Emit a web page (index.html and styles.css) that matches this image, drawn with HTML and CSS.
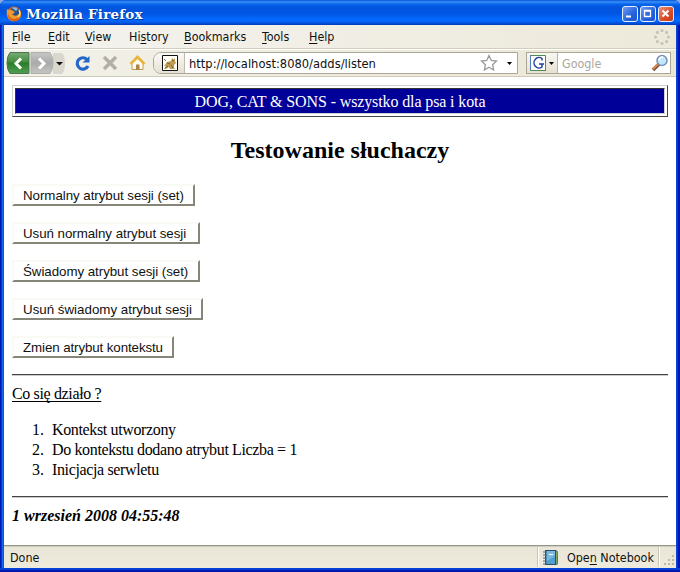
FILE: index.html
```html
<!DOCTYPE html>
<html lang="pl">
<head>
<meta charset="utf-8">
<title>Mozilla Firefox</title>
<link rel="stylesheet" href="styles.css">
</head>
<body>
<div class="window">
  <header class="titlebar">
    <svg class="fox" width="16" height="16" viewBox="0 0 16 16">
      <circle cx="8" cy="8" r="7.4" fill="#cf641a"/>
      <circle cx="8.6" cy="6.8" r="5.4" fill="#284f8e"/>
      <path d="M6 2Q9 0 12 3L10 5L8 3.500Z" fill="#8abde0"/>
      <path d="M1 3L3 4Q6 3 7 5L9 6Q8 8 6 8Q8 11 12 9Q14 7 13 3Q17 8 13 13Q8 17 3 13Q0 9 1 3Z" fill="#f19b2a"/>
      <path d="M2 6Q2 12 8 13Q12 13 14 9Q13 15 8 15Q1 14 2 6Z" fill="#d75b16"/>
      <path d="M13 4Q15 8 12 11" fill="none" stroke="#ffe064" stroke-width="1.300"/>
    </svg>
    <span class="title">Mozilla Firefox</span>
    <div class="controls">
      <span class="control"><svg width="16" height="16"><path d="M4 10.500h5" stroke="#fff" stroke-width="2"/></svg></span>
      <span class="control"><svg width="16" height="16"><path d="M4.500 4.500h6v6h-6zM4 5h7" fill="none" stroke="#fff" stroke-width="1.300"/></svg></span>
      <span class="control close"><svg width="16" height="16"><path d="M4.500 4.500l6 6m0-6l-6 6" stroke="#fff" stroke-width="2"/></svg></span>
    </div>
  </header>

  <nav class="menu">
    <span><u>F</u>ile</span><span><u>E</u>dit</span><span><u>V</u>iew</span><span>Hi<u>s</u>tory</span><span><u>B</u>ookmarks</span><span><u>T</u>ools</span><span><u>H</u>elp</span>
    <svg class="throbber" width="18" height="18" viewBox="0 0 18 18" fill="#c5c3b9">
      <circle cx="9" cy="2.500" r="1.600"/><circle cx="13.600" cy="4.400" r="1.600"/><circle cx="15.500" cy="9" r="1.600"/><circle cx="13.600" cy="13.600" r="1.600"/><circle cx="9" cy="15.500" r="1.600"/><circle cx="4.400" cy="13.600" r="1.600"/><circle cx="2.500" cy="9" r="1.600"/><circle cx="4.400" cy="4.400" r="1.600"/>
    </svg>
  </nav>

  <div class="toolbar">
    <svg class="navicons" width="150" height="27" viewBox="0 0 150 27">
      <defs>
        <linearGradient id="green" x2="0" y2="1"><stop stop-color="#78aa74"/><stop offset=".45" stop-color="#438d40"/><stop offset=".5" stop-color="#277d29"/><stop offset="1" stop-color="#52a052"/></linearGradient>
        <linearGradient id="gray" x2="0" y2="1"><stop stop-color="#c7c7c4"/><stop offset=".5" stop-color="#aaa"/><stop offset="1" stop-color="#c5c5c3"/></linearGradient>
      </defs>
      <path d="M49 3h9q3 3 3 10.500T58 24h-9z" fill="#d9d7ce"/>
      <path d="M6 2.500h19v21H6Q3 20 3 13T6 2.500z" fill="url(#green)" stroke="#4d7450"/>
      <path d="M27 2.500h19q3 4 3 10.500T46 23.500H27z" fill="url(#gray)" stroke="#aeaeaa"/>
      <path d="M17 8.500l-5 5 5 5M35 8.500l5 5-5 5" fill="none" stroke="#fff" stroke-width="3"/>
      <path d="M52 12h7l-3.500 3.500z" fill="#111"/>
      <path d="M83 9.500A5.700 5.700 0 1 0 84 16" fill="none" stroke="#2367cb" stroke-width="3.200"/>
      <path d="M85.500 6v6.500h-7z" fill="#2367cb"/>
      <path d="M100 7l12 12m0-12l-12 12" stroke="#b1afa8" stroke-width="3.500"/>
      <path d="M128 13v6.500h11V13l-5.500-5z" fill="#fffdf2" stroke="#c59a48"/>
      <path d="M126.500 14l7-7 7 7" fill="none" stroke="#eab443" stroke-width="2.800"/>
      <path d="M132 14.500h3.500V20H132z" fill="#ad804b"/>
    </svg>
    <div class="address">
      <span class="identity">
        <svg width="16" height="16"><path d="M.5.500h15v15H.5z" fill="#fffef7" stroke="#111"/><path d="M2 11l3-4 4-1 1-3 1.500 1.500L13 3v3l1 2-2 2v3l2 1H8l-1-2-3 2H2l2-3z" fill="#c19b52"/><path d="M2 4l2 2M5 8l3 1M10 5l2 1M9 10l2 3M3 13l3-2" fill="none" stroke="#77634a"/></svg>
      </span>
      <span class="url">http://localhost:8080/adds/listen</span>
      <svg class="star" width="34" height="18" viewBox="0 0 34 18"><path d="M9 1.500l2.300 5 5.200.6-3.900 3.600 1 5.300L9 13.300 4.400 16l1-5.300-3.900-3.600 5.200-.6z" fill="#fff" stroke="#999" stroke-width="1.300"/><path d="M27 8h5l-2.500 3z" fill="#000"/></svg>
    </div>
    <div class="search">
      <span class="engine">
        <svg width="25" height="17" viewBox="0 0 25 17"><path d="M.5.500h15v15H.5z" fill="#fff" stroke="#4d8c4d"/><path d="M.5 0v15" stroke="#5379bd"/><path d="M15.500 1v15" stroke="#b85454"/><path d="M12 5.500V3.500A5 5.300 0 1 0 12 12V9M9 9h5" fill="none" stroke="#26429a" stroke-width="1.500"/><path d="M19 7h5l-2.500 3z"/></svg>
      </span>
      <span class="query">Google</span>
      <svg class="lens" width="18" height="18" viewBox="0 0 18 18"><path d="M2 16l6-6" stroke="#775247" stroke-width="3.600"/><path d="M2 15l5-5" stroke="#e18a43" stroke-width="2"/><circle cx="11" cy="6.500" r="5" fill="#c2e6fa" stroke="#7992ad" stroke-width="1.500"/><path d="M8 6q1-3 4-3" fill="none" stroke="#fff" stroke-width="1.500"/></svg>
    </div>
  </div>

  <main class="page">
    <div class="banner"><div>DOG, CAT &amp; SONS - wszystko dla psa i kota</div></div>
    <h1><span>Testowanie słuchaczy</span></h1>
    <div class="actions">
      <button class="w-set">Normalny atrybut sesji (set)</button>
      <button class="w-remove">Usuń normalny atrybut sesji</button>
      <button class="w-aware">Świadomy atrybut sesji (set)</button>
      <button class="w-unaware">Usuń świadomy atrybut sesji</button>
      <button class="w-context">Zmien atrybut kontekstu</button>
    </div>
    <hr>
    <p class="question"><u>Co się działo ?</u></p>
    <ol>
      <li>Kontekst utworzony</li>
      <li>Do kontekstu dodano atrybut Liczba = 1</li>
      <li>Inicjacja serwletu</li>
    </ol>
    <hr>
    <p class="date">1 wrzesień 2008 04:55:48</p>
  </main>

  <footer class="status">
    <span class="done">Done</span>
    <div class="notebook">
      <svg width="16" height="17" viewBox="0 0 16 17"><path d="M2 1h11l2 2v12l-2 1H2z" fill="#2b4d6a"/><path d="M13 2l1.500 1v12L13 15z" fill="#83a565"/><path d="M3 2h9v13H3z" fill="#4f9fd0"/><path d="M4 2h8v5L4 12z" fill="#79b9df"/><path d="M6 5h4v1H6z" fill="#fff"/><path d="M0 3h4M0 6h4M0 9h4M0 12h4M0 15h4" stroke="#536b7c"/><path d="M14 3h1v4h-1z" fill="#b9576b"/></svg>
      <span>Ope<u>n</u> Notebook</span>
    </div>
    <svg class="grip" width="12" height="12" fill="#bdb9a5"><path d="M8 0h2v2H8zM4 4h2v2H4zM8 4h2v2H8zM0 8h2v2H0zM4 8h2v2H4zM8 8h2v2H8z"/></svg>
  </footer>
</div>
</body>
</html>
```
FILE: styles.css
```css
* { box-sizing: border-box; }
body { margin: 0; background: #8fabe6; overflow: hidden; }
svg { display: block; flex: none; }
.window {
  width: 680px; height: 572px; padding: 0 4px 4px;
  display: flex; flex-direction: column;
  background: linear-gradient(to right, #0019b4 0 1px, #0831d9 1px 2px, #166aee 2px 3px, #0855dd 3px 4px, #0855dd 4px 676px, #0743d4 676px 677px, #0637c9 677px 678px, #0019b4 678px);
  border-radius: 6px 6px 0 0;
  box-shadow: inset 0 -2px #001aae, inset 0 -4px #0640d8;
  font: 12.4px "DejaVu Sans Condensed", "DejaVu Sans", sans-serif;
  font-stretch: condensed;
  color: #111;
}
.titlebar {
  height: 25px; flex: none; margin: 0 -4px; padding: 3px 6px 0;
  display: flex; align-items: center;
  border-radius: 6px 6px 0 0;
  background: linear-gradient(#0755d6 0, #3b91fa 2px, #0867ed 4px, #0355df 7px, #0255e2 13px, #0368fb 19px, #0368fb 21px, #0248cb 24px, #003bb4 25px);
}
.fox { margin-right: 4px; }
.title { font: bold 13.500px "DejaVu Serif", serif; letter-spacing: .2px; white-space: nowrap; color: #fff; text-shadow: 1px 1px #053693; }
.controls { margin-left: auto; display: flex; gap: 2px; }
.control { width: 16px; height: 16px; border: 1px solid #e7f0ff; border-radius: 3px; background: linear-gradient(135deg, #729bf2, #2461dc 60%, #2057cb); }
.control svg { margin: -1px; }
.close { background: linear-gradient(135deg, #ec9278, #d74b26 60%, #c43b17); }
.menu {
  height: 24px; flex: none; padding-left: 8px;
  display: grid; grid-template-columns: 36px 37px 44px 55px 78px 47px 1fr 23px; align-items: center;
  background: linear-gradient(to right, #f4f3ef, #ede9da);
  border-bottom: 1px solid #d1cebc;
}
.menu u, .notebook u { text-underline-offset: 2px; text-decoration-thickness: 1px; }
.toolbar {
  height: 28px; flex: none; display: flex; align-items: center;
  background: linear-gradient(to right, #f2f1e9, #ebe7d5);
  border-top: 1px solid #fff; border-bottom: 1px solid #cfcbb8;
}
.address { width: 365px; height: 22px; display: flex; align-items: center; margin-left: -1px; background: #fff; border: 1px solid #aaa798; border-radius: 8px 0 0 8px; }
.identity { width: 31px; height: 20px; padding: 2px 8px; background: linear-gradient(#fafaf7, #e4e0d2); border-right: 1px solid #bebbaa; border-radius: 7px 0 0 7px; }
.url { margin-left: 4px; font-size: 12.8px; white-space: nowrap; }
.star { margin-left: auto; margin-right: 3px; }
.search { width: 145px; height: 22px; margin-left: 8px; display: flex; align-items: center; border: 1px solid #aaa798; background: #fff; }
.engine { width: 31px; height: 20px; padding: 2px 3px; border-right: 1px solid #b8b4a3; background: linear-gradient(#f8f7f2, #e5e1d2); }
.query { margin-left: 4px; color: #aaa79d; }
.lens { margin-left: auto; margin-right: 1px; }
.page { flex: 1; min-height: 0; padding: 8px 8px 0; background: #fff; font: 16px/20px "Liberation Serif", serif; color: #000; }
.banner { height: 32px; padding: 2px; border: 1px solid; border-color: #d0d0d0 #444 #444 #d0d0d0; }
.banner div { height: 26px; border: 1px solid; border-color: #333 #d0d0d0 #d0d0d0 #333; background: #000099; color: #fff; text-align: center; line-height: 26px; letter-spacing: -.12px; }
h1 { margin: 19px 0 19px; font-size: 24px; line-height: 29px; text-align: center; }
.actions { display: flex; flex-direction: column; align-items: flex-start; gap: 16px; }
button { height: 22px; padding: 0 0 0 9px; text-align: left; white-space: nowrap; font: 13.333px "Liberation Sans", sans-serif; letter-spacing: -.05px; color: #111; background: #fff; border: 2px solid; border-color: #fafaf5 #85857a #85857a #fafaf5; }
.w-set { width: 183px; }
.w-remove, .w-aware { width: 188px; }
.w-unaware { width: 191px; letter-spacing: 0; }
.w-context { width: 162px; letter-spacing: -.1px; }
hr { margin: 16px 0 8px; height: 2px; border: 0; border-top: 1px solid #444; border-bottom: 1px solid #ccc; }
.page p { margin: 0; }
.question, ol { letter-spacing: -.36px; }
.question u { text-underline-offset: 2px; text-decoration-thickness: 1px; text-decoration-skip-ink: none; }
ol { margin: 16px 0; padding-left: 20px; list-style: none; counter-reset: item; }
li { display: flex; counter-increment: item; }
li::before { content: counter(item) "."; width: 20px; letter-spacing: 0; }
.date { font-weight: bold; font-style: italic; }
.status { height: 23px; flex: none; display: flex; align-items: center; border-top: 1px solid #96958a; box-shadow: inset 0 1px #d0cdbd; background: linear-gradient(#e9e6d7, #eeebdc); }
.done { margin-left: 6px; }
.notebook { margin-left: auto; width: 122px; height: 20px; padding-left: 5px; display: flex; gap: 8px; align-items: center; white-space: nowrap; border-left: 1px solid #c8c4b3; border-right: 1px solid #c8c4b3; box-shadow: inset 1px 0 #fff, 1px 0 #fff; }
.grip { margin: 8px 0 0 5px; }
```
